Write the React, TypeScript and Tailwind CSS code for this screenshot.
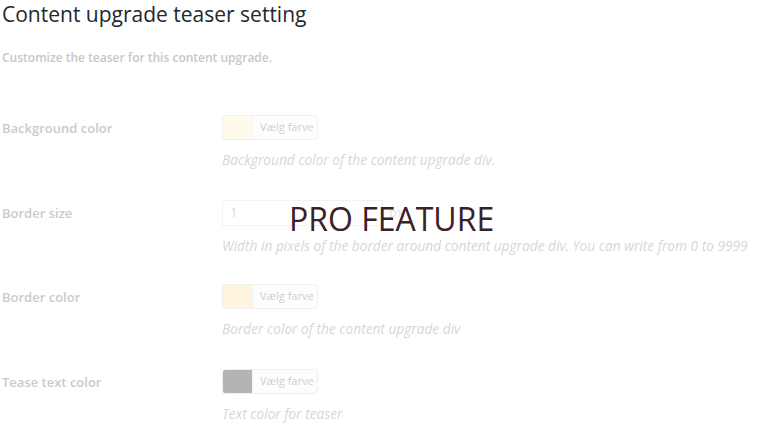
import React from 'react';

type Row = {
  label: string;
  kind: 'color' | 'number';
  swatch?: string;
  help: string;
  top: string;
};

const rows: Row[] = [
  { label: 'Background color', kind: 'color', swatch: 'bg-[#fffaeb]', help: 'Background color of the content upgrade div.', top: 'pt-[48px]' },
  { label: 'Border size', kind: 'number', help: 'Width in pixels of the border around content upgrade div. You can write from 0 to 9999', top: 'pt-[29px]' },
  { label: 'Border color', kind: 'color', swatch: 'bg-[#fff5df]', help: 'Border color of the content upgrade div', top: 'pt-[28px]' },
  { label: 'Tease text color', kind: 'color', swatch: 'bg-[#b4b4b4]', help: 'Text color for teaser', top: 'pt-[29px]' },
];

const ColorButton = ({ swatch }: { swatch: string }) => (
  <div className="flex h-[25px] w-[96px] overflow-hidden rounded-[3px] border border-[#f0f0f0] bg-[#fdfdfd]">
    <span className={`w-[30px] border-r border-[#f3f3f3] ${swatch}`} />
    <span className="flex items-center pl-[7px] text-[11px] text-[#cfcfcf]">Vælg farve</span>
  </div>
);

export default function App() {
  return (
    <div className="relative h-[440px] w-[783px] overflow-hidden bg-white font-['Open_Sans','Noto_Sans',sans-serif]">
      <h1 className="pl-[2px] pt-[1px] text-[21px] leading-[26px] text-[#23282d]">Content upgrade teaser setting</h1>
      <p className="pl-[2px] pt-[22px] text-[12px] font-semibold text-[#c6c8ca]">Customize the teaser for this content upgrade.</p>

      <div className="flex flex-col">
        {rows.map((r) => (
          <div key={r.label} className={`flex ${r.top}`}>
            <div className="w-[222px] pl-[2px] pt-[4px] text-[13px] font-semibold text-[#c9cbcd]">{r.label}</div>
            <div className="flex flex-col">
              {r.kind === 'color' ? (
                <ColorButton swatch={r.swatch!} />
              ) : (
                <div className="flex items-center">
                  <div className="flex h-[26px] w-[161px] items-center border border-[#f2f2f2] pl-[7px] text-[13px] text-[#d8d8d8]">1</div>
                  <span className="pl-[6px] text-[13px] text-[#e0e0e0]">px</span>
                </div>
              )}
              <p className="pt-[10px] text-[13.7px] italic text-[#d9d6d6]">{r.help}</p>
            </div>
          </div>
        ))}
      </div>

      <div className="absolute left-[289px] top-[199px] text-[32px] leading-[40px] text-[#3a2126]">PRO FEATURE</div>
    </div>
  );
}
